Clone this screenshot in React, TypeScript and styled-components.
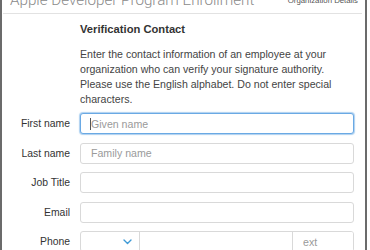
import React from "react";
import styled, { createGlobalStyle } from "styled-components";

const Global = createGlobalStyle`
  html, body { margin: 0; padding: 0; background: #ffffff; }
  body { font-family: "Liberation Sans", Arial, sans-serif; color: #333; overflow: hidden; }
  * { box-sizing: border-box; }
`;

const Frame = styled.div`
  width: 367px;
  height: 250px;
  border-left: 2px solid #6b6b6b;
  border-right: 2px solid #6b6b6b;
  overflow: hidden;
`;

const Header = styled.div`
  height: 14px;
  margin: 0 3px 0 1px;
  border-bottom: 1px solid #e2e2e2;
  display: flex;
  justify-content: space-between;
  align-items: flex-start;
  overflow: hidden;
  padding: 0 4px 0 7px;
`;

const Title = styled.div`
  font-family: Roboto, "Liberation Sans", sans-serif;
  font-weight: 300;
  font-size: 15.2px;
  line-height: 15.2px;
  margin-top: -7.5px;
  color: #8a8a8a;
  white-space: nowrap;
`;

const Step = styled.div`
  font-size: 7.8px;
  line-height: 9px;
  margin-top: -4px;
  color: #555;
  white-space: nowrap;
`;

const Form = styled.div`
  display: grid;
  grid-template-columns: 68px 274px;
  column-gap: 10px;
  row-gap: 8.5px;
  padding-top: 7.5px;
  align-items: center;
`;

const Intro = styled.div`
  grid-column: 2;
  margin-bottom: -2px;
`;

const Heading = styled.div`
  font-size: 11.2px;
  font-weight: bold;
  line-height: 15px;
  color: #333;
  margin-bottom: 10px;
`;

const Para = styled.p`
  margin: 0;
  font-size: 10.6px;
  line-height: 15px;
  color: #444;
`;

const Label = styled.label`
  font-size: 10.4px;
  color: #333;
  text-align: right;
  white-space: nowrap;
`;

const FieldWrap = styled.div`
  position: relative;
`;

const Input = styled.input<{ $focused?: boolean }>`
  display: block;
  width: 100%;
  height: 21px;
  border: 1px solid ${(p) => (p.$focused ? "#6aa9e4" : "#d9d9d9")};
  border-radius: 3px;
  box-shadow: ${(p) => (p.$focused ? "0 0 1px 1px rgba(106,169,228,0.55)" : "none")};
  padding: 0 10px;
  font-family: "Liberation Sans", Arial, sans-serif;
  font-size: 10.6px;
  color: #333;
  background: #fff;
  outline: none;
  &::placeholder { color: #9a9a9a; }
`;

const Caret = styled.span`
  position: absolute;
  left: 10px;
  top: 5px;
  width: 1px;
  height: 12px;
  background: #555;
`;

const PhoneGroup = styled.div`
  display: flex;
  height: 21px;
  border: 1px solid #d9d9d9;
  border-radius: 3px;
  overflow: hidden;
`;

const CountrySelect = styled.div`
  width: 59px;
  border-right: 1px solid #d9d9d9;
  display: flex;
  align-items: center;
  justify-content: flex-end;
  padding-right: 7px;
`;

const Segment = styled.input<{ $w?: number }>`
  border: none;
  outline: none;
  height: 100%;
  padding: 0 10px;
  font-family: "Liberation Sans", Arial, sans-serif;
  font-size: 10.6px;
  color: #333;
  min-width: 0;
  ${(p) => (p.$w ? `width: ${p.$w}px; flex: none; border-left: 1px solid #d9d9d9;` : "flex: 1;")}
  &::placeholder { color: #9a9a9a; }
`;

const Chevron = () => (
  <svg width="9" height="6" viewBox="0 0 9 6">
    <path d="M1 1l3.5 3.5L8 1" fill="none" stroke="#3f9ad6" strokeWidth="1.4" strokeLinecap="round" strokeLinejoin="round" />
  </svg>
);

export default function App() {
  return (
    <>
      <Global />
      <Frame>
        <Header>
          <Title>Apple Developer Program Enrollment</Title>
          <Step>Organization Details</Step>
        </Header>
        <Form>
          <Intro>
            <Heading>Verification Contact</Heading>
            <Para>
              Enter the contact information of an employee at your organization who can verify your signature authority. Please use the English alphabet. Do not enter special characters.
            </Para>
          </Intro>
          <Label>First name</Label>
          <FieldWrap>
            <Input $focused placeholder="Given name" />
            <Caret />
          </FieldWrap>
          <Label>Last name</Label>
          <Input placeholder="Family name" />
          <Label>Job Title</Label>
          <Input />
          <Label>Email</Label>
          <Input />
          <Label>Phone</Label>
          <PhoneGroup>
            <CountrySelect>
              <Chevron />
            </CountrySelect>
            <Segment />
            <Segment $w={61} placeholder="ext" />
          </PhoneGroup>
        </Form>
      </Frame>
    </>
  );
}
